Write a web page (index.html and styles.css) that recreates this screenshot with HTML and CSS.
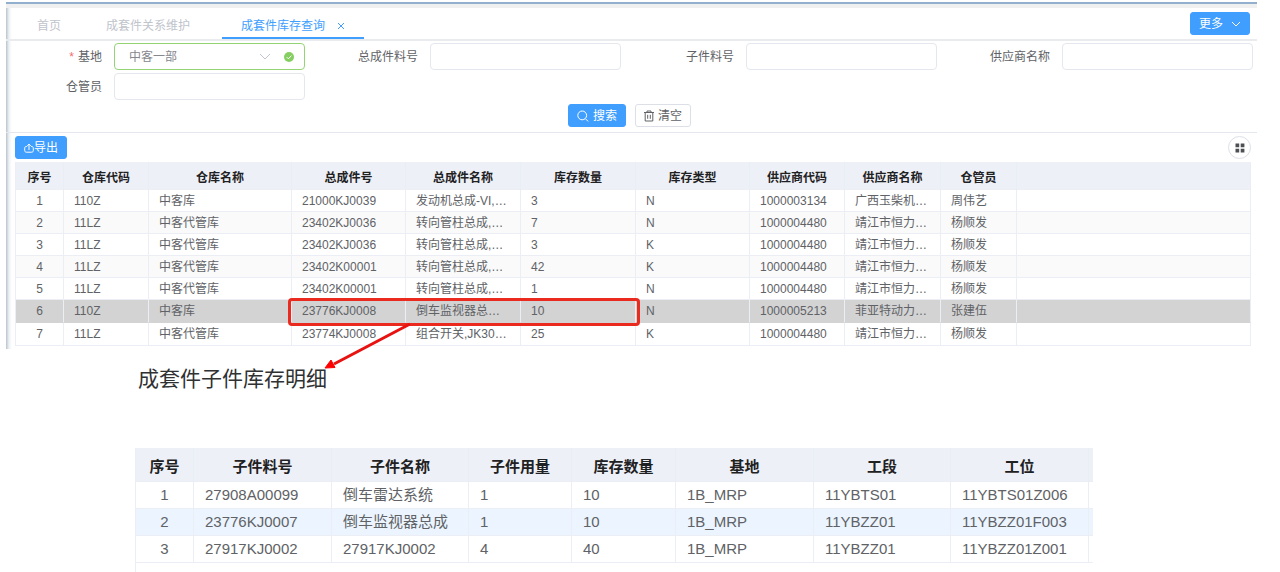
FILE: index.html
```html
<!DOCTYPE html>
<html lang="zh-CN">
<head>
<meta charset="utf-8">
<title>成套件库存查询</title>
<link rel="stylesheet" href="styles.css">
</head>
<body>
<main class="panel">
  <nav class="tabs">
    <a class="tab tab-home" href="#">首页</a>
    <a class="tab tab-relation" href="#">成套件关系维护</a>
    <div class="tab tab-active">
      <a href="#" aria-current="page">成套件库存查询</a>
      <button class="close" type="button" aria-label="关闭"><svg width="8" height="8" viewBox="0 0 8 8"><path d="M1 1l6 6M7 1L1 7"/></svg></button>
    </div>
    <button class="btn btn-primary more" type="button">更多<svg width="10" height="6" viewBox="0 0 10 6"><path d="M1 1l4 4 4-4"/></svg></button>
  </nav>

  <form class="search">
    <div class="fields">
      <label class="required" for="base">基地</label>
      <div class="select-wrap">
        <select id="base"><option>中客一部</option></select>
        <svg class="arrow" width="10" height="6" viewBox="0 0 10 6"><path d="M0 0l5 5 5-5"/></svg>
        <svg class="valid" width="10" height="10" viewBox="0 0 10 10"><circle cx="5" cy="5" r="5"/><path d="M2.7 5.1l1.7 1.7 3-3.2"/></svg>
      </div>
      <label for="assembly">总成件料号</label><input id="assembly" type="text">
      <label for="part">子件料号</label><input id="part" type="text">
      <label for="supplier">供应商名称</label><input id="supplier" type="text">
      <label for="keeper">仓管员</label><input id="keeper" type="text">
    </div>
    <div class="actions">
      <button class="btn btn-primary" type="button"><svg width="12" height="12" viewBox="0 0 12 12"><circle cx="5.2" cy="5.4" r="4.4"/><path d="M8.4 8.7l2.7 2.7"/></svg>搜索</button>
      <button class="btn btn-plain" type="button"><svg width="10" height="12" viewBox="0 0 10 12"><path d="M0 2.5h10M3 2.300V1h4v1.300M1.200 2.500v8.500h7.600V2.500M3.700 4.800v4M6.300 4.800v4"/></svg>清空</button>
    </div>
  </form>

  <section class="results">
    <div class="toolbar">
      <button class="btn btn-primary export" type="button"><svg width="10" height="10" viewBox="0 0 10 10"><path d="M3 3.500H2.200C1.200 3.500.7 4.200.7 5.200v2.300c0 1 .6 1.700 1.600 1.700h5.400c1 0 1.600-.7 1.600-1.700V5.200c0-1-.5-1.700-1.500-1.700H7M5 7V1.200M3.200 2.900L5 1.100l1.800 1.800"/></svg>导出</button>
      <button class="round" type="button" aria-label="列设置"><svg width="10" height="10" viewBox="0 0 10 10"><path d="M.5.500h3.700v3.700H.5zM5.700.500h3.700v3.700H5.700zM.5 5.700h3.700v3.700H.5zM5.700 5.700h3.700v3.700H5.700z"/></svg></button>
    </div>
    <table class="grid stock">
      <colgroup><col class="w48"><col class="w85"><col class="w143"><col class="w114"><col class="w115"><col class="w115"><col class="w114"><col class="w95"><col class="w96"><col class="w76"><col></colgroup>
      <thead><tr><th>序号</th><th>仓库代码</th><th>仓库名称</th><th>总成件号</th><th>总成件名称</th><th>库存数量</th><th>库存类型</th><th>供应商代码</th><th>供应商名称</th><th>仓管员</th><th></th></tr></thead>
      <tbody>
        <tr><td>1</td><td>110Z</td><td>中客库</td><td>21000KJ0039</td><td>发动机总成-VI,…</td><td>3</td><td>N</td><td>1000003134</td><td>广西玉柴机…</td><td>周伟艺</td><td></td></tr>
        <tr><td>2</td><td>11LZ</td><td>中客代管库</td><td>23402KJ0036</td><td>转向管柱总成,…</td><td>7</td><td>N</td><td>1000004480</td><td>靖江市恒力…</td><td>杨顺发</td><td></td></tr>
        <tr><td>3</td><td>11LZ</td><td>中客代管库</td><td>23402KJ0036</td><td>转向管柱总成,…</td><td>3</td><td>K</td><td>1000004480</td><td>靖江市恒力…</td><td>杨顺发</td><td></td></tr>
        <tr><td>4</td><td>11LZ</td><td>中客代管库</td><td>23402K00001</td><td>转向管柱总成,…</td><td>42</td><td>K</td><td>1000004480</td><td>靖江市恒力…</td><td>杨顺发</td><td></td></tr>
        <tr><td>5</td><td>11LZ</td><td>中客代管库</td><td>23402K00001</td><td>转向管柱总成,…</td><td>1</td><td>N</td><td>1000004480</td><td>靖江市恒力…</td><td>杨顺发</td><td></td></tr>
        <tr class="selected"><td>6</td><td>110Z</td><td>中客库</td><td>23776KJ0008</td><td>倒车监视器总…</td><td>10</td><td>N</td><td>1000005213</td><td>菲亚特动力…</td><td>张建伍</td><td></td></tr>
        <tr><td>7</td><td>11LZ</td><td>中客代管库</td><td>23774KJ0008</td><td>组合开关,JK30…</td><td>25</td><td>K</td><td>1000004480</td><td>靖江市恒力…</td><td>杨顺发</td><td></td></tr>
      </tbody>
    </table>
    <div class="callout"></div>
    <svg class="pointer" width="90" height="50" viewBox="0 0 90 50"><path class="shaft" d="M87 2L11 42"/><path class="head" d="M2 46l6-8 4 7.500z"/></svg>
  </section>
</main>

<section class="detail">
  <h1>成套件子件库存明细</h1>
  <div class="detail-body">
    <table class="grid parts">
      <colgroup><col class="w58"><col class="w138"><col class="w137"><col class="w103"><col class="w104"><col class="w138"><col class="w137"><col class="w138"><col></colgroup>
      <thead><tr><th>序号</th><th>子件料号</th><th>子件名称</th><th>子件用量</th><th>库存数量</th><th>基地</th><th>工段</th><th>工位</th><th></th></tr></thead>
      <tbody>
        <tr><td>1</td><td>27908A00099</td><td>倒车雷达系统</td><td>1</td><td>10</td><td>1B_MRP</td><td>11YBTS01</td><td>11YBTS01Z006</td><td></td></tr>
        <tr class="hover"><td>2</td><td>23776KJ0007</td><td>倒车监视器总成</td><td>1</td><td>10</td><td>1B_MRP</td><td>11YBZZ01</td><td>11YBZZ01F003</td><td></td></tr>
        <tr><td>3</td><td>27917KJ0002</td><td>27917KJ0002</td><td>4</td><td>40</td><td>1B_MRP</td><td>11YBZZ01</td><td>11YBZZ01Z001</td><td></td></tr>
      </tbody>
    </table>
  </div>
</section>
</body>
</html>
```
FILE: styles.css
```css
* { box-sizing: border-box; }
body {
  margin: 0;
  background: #fff;
  color: #606266;
  font: 12px/16px "Liberation Sans", "Noto Sans CJK SC", sans-serif;
}
button, input, select { font: inherit; color: inherit; margin: 0; }
a { color: inherit; text-decoration: none; }
svg { fill: none; stroke: currentColor; flex: none; }

.panel {
  margin: 2px 23px 0 6px;
  padding-bottom: 3px;
  border-top: 2px solid #93afce;
  background: linear-gradient(90deg, #b9c3cc, #eef2f5 3px, #fff 6px);
}

/* Tabs */
.tabs {
  display: flex;
  align-items: stretch;
  height: 37px;
  padding-right: 7px;
  border-top: 4px solid #f0f0f0;
  border-bottom: 2px solid #e9ebee;
}
.tab { display: flex; align-items: center; padding-top: 4px; color: #c0c4cc; }
.tab-home { padding-left: 31px; }
.tab-relation { padding-left: 45px; margin-right: 32px; }
.tab-active {
  gap: 12px;
  padding-left: 19px;
  padding-right: 19px;
  color: #409eff;
  box-shadow: inset 0 -2px #409eff;
}
.close { display: flex; padding: 0; border: 0; background: none; }

.btn {
  display: inline-flex;
  align-items: center;
  justify-content: center;
  gap: 5px;
  height: 23px;
  padding: 0 8px;
  border: 1px solid #dcdfe6;
  border-radius: 3px;
  background: #fff;
}
.btn-primary { border-color: #409eff; background: #409eff; color: #fff; }
.more { align-self: center; gap: 8px; margin-left: auto; }

/* Search form */
.search { border-bottom: 1px solid #e4e7ed; padding: 2px 4px 5px 0; }
.fields {
  display: grid;
  grid-template-columns: 96px 1fr 101px 1fr 101px 1fr 101px 1fr;
  gap: 3px 12px;
  align-items: center;
}
.fields label { text-align: right; }
.required::before { content: "*"; margin-right: 4px; color: #f56c6c; }
.fields input, .fields select {
  width: 100%;
  height: 27px;
  padding: 0 14px;
  border: 1px solid #e4e7ed;
  border-radius: 4px;
  background: #fff;
}
.select-wrap { position: relative; }
.fields select { appearance: none; display: block; border-color: #95d475; color: #85888e; }
.arrow { position: absolute; right: 35px; top: 11px; color: #c0c4cc; }
.valid { position: absolute; right: 11px; top: 9px; color: #fff; }
.valid circle { fill: #85ce61; stroke: none; }
.actions { display: flex; justify-content: center; gap: 9px; margin-top: 4px; }
.actions .btn { gap: 4px; }

/* Result list */
.results { position: relative; padding: 3px 6px 0 9px; }
.toolbar { display: flex; justify-content: space-between; align-items: center; margin-bottom: 3px; }
.export { gap: 0; }
.round {
  display: flex;
  align-items: center;
  justify-content: center;
  width: 23px;
  height: 23px;
  padding: 0;
  border: 1px solid #dcdfe6;
  border-radius: 50%;
  background: #fff;
}
.round svg { fill: #4d4f53; stroke: none; }

.grid { width: 100%; table-layout: fixed; border-collapse: separate; border-spacing: 0; border-left: 1px solid #ebeef5; }
.grid th, .grid td {
  padding: 0 10px;
  border-right: 1px solid #ebeef5;
  border-bottom: 1px solid #ebeef5;
  text-align: left;
  white-space: nowrap;
}
.grid th { background: #edf1f7; color: #1f2123; text-align: center; padding: 0; border-right-color: #e9edf4; }
.grid td:first-child { text-align: center; }
.stock { background: #fff; }
.stock th { height: 28px; padding-top: 4px; }
.stock td { height: 22px; }
.stock tbody tr:last-child td { height: 23px; }
.stock tbody tr:nth-child(even) { background: #fafafa; }
.stock tbody tr.selected { background: #d3d3d3; }
.stock .selected td { height: 23px; border-bottom-color: #d3d3d3; }

.callout {
  position: absolute;
  left: 282px;
  top: 165px;
  width: 352px;
  height: 28px;
  border: 3px solid #ea2a1f;
  border-radius: 4px;
}
.pointer { position: absolute; left: 317px; top: 189px; }
.shaft { stroke: #e81210; stroke-width: 3; }
.head { fill: #f00; stroke: #f00; }

/* Part detail */
.detail { margin: 0 187px 0 135px; font-size: 15px; line-height: 20px; }
.detail h1 { margin: 0; padding: 15px 0 54px 3px; color: #303133; font-size: 21px; font-weight: 400; line-height: 30px; }
.detail-body { padding-bottom: 10px; border-left: 1px solid #ebeef5; }
.parts { border-left: 0; }
.parts th { height: 34px; padding-top: 5px; }
.parts td { height: 27px; padding: 0 11px; }
.parts th:last-child, .parts td:last-child { padding: 0; border-right: 0; }
.parts .hover { background: #ecf5ff; }

.w48 { width: 48px; }
.w58 { width: 58px; }
.w76 { width: 76px; }
.w85 { width: 85px; }
.w95 { width: 95px; }
.w96 { width: 96px; }
.w103 { width: 103px; }
.w104 { width: 104px; }
.w114 { width: 114px; }
.w115 { width: 115px; }
.w137 { width: 137px; }
.w138 { width: 138px; }
.w143 { width: 143px; }
```
